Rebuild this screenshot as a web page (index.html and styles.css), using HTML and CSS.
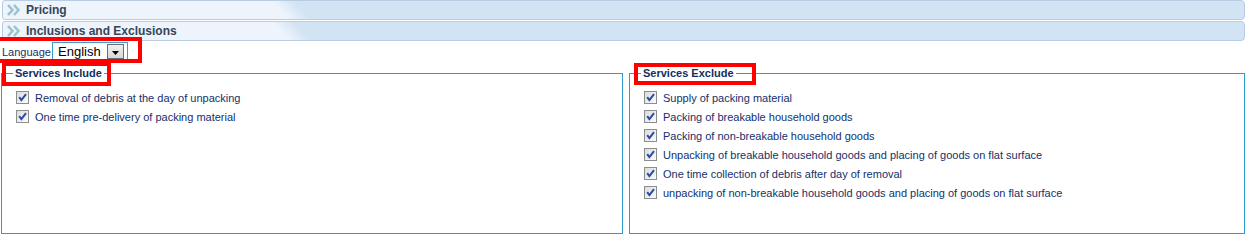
FILE: index.html
```html
<!DOCTYPE html>
<html>
<head>
<meta charset="utf-8">
<link rel="stylesheet" href="styles.css">
</head>
<body>
<div class="page">
  <div class="bar">
    <svg class="chev" width="13" height="12" viewBox="0 0 13 12"><path d="M1 1 L5.5 6 L1 11 M7 1 L11.5 6 L7 11" fill="none" stroke="#9fc3cd" stroke-width="2.6"/></svg>
    <span class="bar-title">Pricing</span>
  </div>
  <div class="bar">
    <svg class="chev" width="13" height="12" viewBox="0 0 13 12"><path d="M1 1 L5.5 6 L1 11 M7 1 L11.5 6 L7 11" fill="none" stroke="#9fc3cd" stroke-width="2.6"/></svg>
    <span class="bar-title">Inclusions and Exclusions</span>
  </div>
  <div class="lang-row">
    <span class="lang-label">Language</span>
    <div class="select">
      <span class="select-value">English</span>
      <span class="drop-btn"><svg width="7" height="4" viewBox="0 0 7 4"><path d="M0 0 L7 0 L3.5 4 Z" fill="#000"/></svg></span>
    </div>
  </div>
  <div class="panels">
    <fieldset class="panel">
      <legend>Services Include</legend>
      <ul class="items">
        <li><span class="cb"><svg width="11" height="11" viewBox="0 0 11 11"><path d="M2.2 5.2 L4.4 8.2 L9 2.2" fill="none" stroke="#2a4aa6" stroke-width="2"/></svg></span>Removal of debris at the day of unpacking</li>
        <li><span class="cb"><svg width="11" height="11" viewBox="0 0 11 11"><path d="M2.2 5.2 L4.4 8.2 L9 2.2" fill="none" stroke="#2a4aa6" stroke-width="2"/></svg></span>One time pre-delivery of packing material</li>
      </ul>
    </fieldset>
    <fieldset class="panel">
      <legend>Services Exclude</legend>
      <ul class="items">
        <li><span class="cb"><svg width="11" height="11" viewBox="0 0 11 11"><path d="M2.2 5.2 L4.4 8.2 L9 2.2" fill="none" stroke="#2a4aa6" stroke-width="2"/></svg></span>Supply of packing material</li>
        <li><span class="cb"><svg width="11" height="11" viewBox="0 0 11 11"><path d="M2.2 5.2 L4.4 8.2 L9 2.2" fill="none" stroke="#2a4aa6" stroke-width="2"/></svg></span>Packing of breakable household goods</li>
        <li><span class="cb"><svg width="11" height="11" viewBox="0 0 11 11"><path d="M2.2 5.2 L4.4 8.2 L9 2.2" fill="none" stroke="#2a4aa6" stroke-width="2"/></svg></span>Packing of non-breakable household goods</li>
        <li><span class="cb"><svg width="11" height="11" viewBox="0 0 11 11"><path d="M2.2 5.2 L4.4 8.2 L9 2.2" fill="none" stroke="#2a4aa6" stroke-width="2"/></svg></span>Unpacking of breakable household goods and placing of goods on flat surface</li>
        <li><span class="cb"><svg width="11" height="11" viewBox="0 0 11 11"><path d="M2.2 5.2 L4.4 8.2 L9 2.2" fill="none" stroke="#2a4aa6" stroke-width="2"/></svg></span>One time collection of debris after day of removal</li>
        <li><span class="cb"><svg width="11" height="11" viewBox="0 0 11 11"><path d="M2.2 5.2 L4.4 8.2 L9 2.2" fill="none" stroke="#2a4aa6" stroke-width="2"/></svg></span>unpacking of non-breakable household goods and placing of goods on flat surface</li>
      </ul>
    </fieldset>
  </div>
  <div class="mark mark-lang"></div>
  <div class="mark mark-include"></div>
  <div class="mark mark-exclude"></div>
</div>
</body>
</html>
```
FILE: styles.css
```css
html, body {
  margin: 0;
  padding: 0;
  background: #fff;
}
body {
  font-family: "Liberation Sans", Arial, sans-serif;
  font-size: 11px;
  color: #15306b;
}
.page {
  position: relative;
  width: 1258px;
  height: 240px;
  overflow: hidden;
}
.bar {
  box-sizing: border-box;
  width: 1243px;
  height: 20px;
  margin: 0 0 1px 2px;
  border: 1px solid #b8cce4;
  border-radius: 3px 4px 4px 3px;
  background: linear-gradient(46deg, #edf4fc 0, #edf4fc 206px, #d2e3f3 222px, #d2e3f3 100%);
  display: flex;
  align-items: center;
  padding-left: 4px;
}
.chev {
  display: block;
  flex: none;
}
.bar-title {
  margin-left: 6px;
  font-weight: bold;
  font-size: 12px;
  color: #364558;
}
.lang-row {
  display: flex;
  align-items: center;
  height: 19px;
  margin-top: 1px;
  padding-left: 2px;
}
.lang-label {
  width: 50px;
  color: #15306b;
}
.select {
  box-sizing: border-box;
  width: 76px;
  height: 19px;
  border: 1px solid #3c9cd0;
  display: flex;
  align-items: center;
  justify-content: space-between;
  padding: 0 3px 0 5px;
}
.select-value {
  font-size: 13px;
  color: #000;
}
.drop-btn {
  flex: none;
  box-sizing: border-box;
  width: 17px;
  height: 15px;
  border: 1px solid #6e6e6e;
  background: linear-gradient(#f0f0f0, #d8d8d8);
  display: flex;
  align-items: flex-end;
  justify-content: center;
  padding-bottom: 3px;
}
.drop-btn svg {
  display: block;
}
.panels {
  display: grid;
  grid-template-columns: 622px 616px;
  column-gap: 6px;
  margin-top: 6px;
  padding-left: 1px;
}
.panel {
  box-sizing: border-box;
  height: 167px;
  margin: 0;
  min-width: 0;
  border: 1px solid #2f9bcc;
  padding: 9px 0 0 11px;
}
.panel legend {
  padding: 0 2px;
  font-weight: bold;
  font-size: 11px;
  color: #102f63;
}
.items {
  list-style: none;
  margin: 0;
  padding: 0 0 0 3px;
}
.items li {
  display: flex;
  align-items: center;
  height: 19px;
}
.cb {
  box-sizing: border-box;
  width: 13px;
  height: 13px;
  border: 1px solid #8c8d8e;
  background: linear-gradient(135deg, #dcdcdc, #fbfbfb);
  margin-right: 6px;
  display: flex;
  align-items: center;
  justify-content: center;
  flex: none;
}
.cb svg {
  display: block;
}
.mark {
  position: absolute;
  box-sizing: border-box;
  border: 4px solid #ff0000;
}
.mark-lang {
  left: -4px;
  top: 37px;
  width: 146px;
  height: 26px;
}
.mark-include {
  left: 2px;
  top: 62px;
  width: 109px;
  height: 24px;
}
.mark-exclude {
  left: 634px;
  top: 63px;
  width: 122px;
  height: 22px;
}
```
